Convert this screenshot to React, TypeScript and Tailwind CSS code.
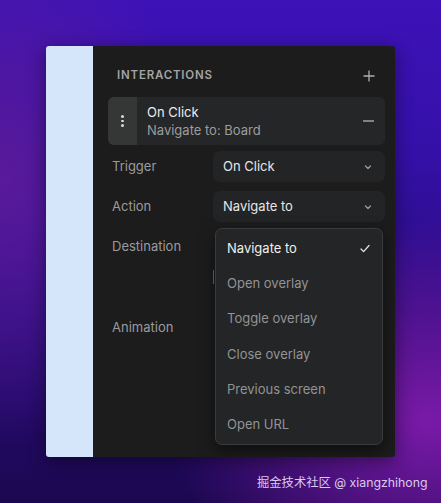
import React from "react";

const font = { fontFamily: "Inter, 'Noto Sans', 'Noto Sans CJK SC', sans-serif" };

function Chevron() {
  return (
    <svg width="10" height="10" viewBox="0 0 10 10" fill="none">
      <path d="M2.5 4l2.5 2.5L7.5 4" stroke="#9a9b9c" strokeWidth="1.3" strokeLinecap="round" strokeLinejoin="round" />
    </svg>
  );
}

function Select({ value }: { value: string }) {
  return (
    <div className="w-[172px] h-[31px] rounded-[7px] bg-[#232425] flex items-center justify-between pl-[10px] pr-[12px]">
      <span className="text-[13px] text-[#e6e6e6]">{value}</span>
      <Chevron />
    </div>
  );
}

const options = ["Navigate to", "Open overlay", "Toggle overlay", "Close overlay", "Previous screen", "Open URL"];

export default function App() {
  return (
    <div
      className="relative w-[441px] h-[503px] overflow-hidden"
      style={{
        ...font,
        background:
          "radial-gradient(ellipse 260px 200px at 430px 420px, #7a1aa8 0%, rgba(122,26,168,0) 100%), radial-gradient(ellipse 200px 260px at 0px 180px, #5a1a9a 0%, rgba(90,26,154,0) 100%), linear-gradient(180deg, #3d12b8 0%, #3510a8 30%, #2a0c80 60%, #1c0850 100%)",
      }}
    >
      <div className="pt-[46px] pl-[46px]">
        <div className="flex w-[349px] h-[411px] rounded-[3px] overflow-hidden shadow-[0_4px_18px_rgba(0,0,0,0.45)]">
          <div className="w-[47px] bg-[#d5e6fb]" />
          <div className="relative flex-1 bg-[#1c1c1d] pl-[15px] pr-[10px] pt-[22px]">
            {/* section header */}
            <div className="flex items-center justify-between h-[16px] pl-[9px] pr-[10px]">
              <span className="text-[11.5px] font-semibold tracking-[0.8px] text-[#a3a3a4]">INTERACTIONS</span>
              <svg width="12" height="12" viewBox="0 0 12 12">
                <path d="M6 0.5v11M0.5 6h11" stroke="#b0b0b0" strokeWidth="1.3" />
              </svg>
            </div>

            {/* interaction card */}
            <div className="mt-[13px] flex h-[48px] rounded-[6px] bg-[#252627] overflow-hidden">
              <div className="w-[29px] bg-[#353737] flex flex-col items-center justify-center gap-[2px]">
                <span className="w-[2.5px] h-[2.5px] rounded-full bg-[#d8d8d8]" />
                <span className="w-[2.5px] h-[2.5px] rounded-full bg-[#d8d8d8]" />
                <span className="w-[2.5px] h-[2.5px] rounded-full bg-[#d8d8d8]" />
              </div>
              <div className="flex-1 flex items-center justify-between pl-[10px] pr-[11px]">
                <div className="flex flex-col leading-[18px]">
                  <span className="text-[13px] text-[#ececec]">On Click</span>
                  <span className="text-[13px] text-[#9c9d9e]">Navigate to: Board</span>
                </div>
                <svg width="11" height="2" viewBox="0 0 11 2">
                  <path d="M0 1h11" stroke="#a0a0a0" strokeWidth="1.3" />
                </svg>
              </div>
            </div>

            {/* properties */}
            <div className="mt-[6px] flex flex-col gap-[9px]">
              <div className="flex items-center justify-between pl-[4px]">
                <span className="text-[13px] text-[#9a9b9c]">Trigger</span>
                <Select value="On Click" />
              </div>
              <div className="flex items-center justify-between pl-[4px]">
                <span className="text-[13px] text-[#9a9b9c]">Action</span>
                <Select value="Navigate to" />
              </div>
              <div className="flex items-start justify-between pl-[4px] h-[78px]">
                <span className="text-[13px] text-[#9a9b9c] mt-[6px]">Destination</span>
              </div>
              <div className="flex items-center pl-[4px]">
                <span className="text-[13px] text-[#9a9b9c]">Animation</span>
              </div>
            </div>

            {/* edge of the destination field under the menu */}
            <div className="absolute left-[120px] top-[224px] w-[1px] h-[14px] bg-[#6a6a6a]" />

            {/* action menu */}
            <div className="absolute left-[122px] top-[182px] w-[168px] h-[217px] rounded-[7px] bg-[#232526] border border-[#3a3b3c] shadow-[0_6px_16px_rgba(0,0,0,0.5)] pt-[2px]">
              {options.map((o, i) => (
                <div key={o} className="h-[35.3px] flex items-center justify-between pl-[11px] pr-[12px]">
                  <span className={"text-[13px] " + (i === 0 ? "text-[#f0f0f0]" : "text-[#929394]")}>{o}</span>
                  {i === 0 && (
                    <svg width="10" height="9" viewBox="0 0 10 9" fill="none">
                      <path d="M1 5l2.6 2.6L9 1.5" stroke="#e0e0e0" strokeWidth="1.3" strokeLinecap="round" strokeLinejoin="round" />
                    </svg>
                  )}
                </div>
              ))}
            </div>
          </div>
        </div>
      </div>

      <div className="absolute left-[257px] top-[474px] text-[12.3px] leading-[18px] text-[#d9c9ec]">
        掘金技术社区 @ xiangzhihong
      </div>
    </div>
  );
}
